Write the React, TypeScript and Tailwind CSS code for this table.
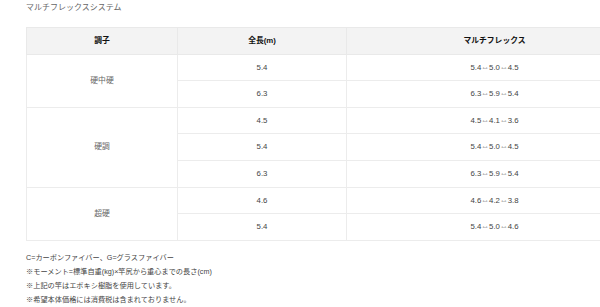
import React from "react";

const groups = [
  { name: "硬中硬", rows: [["5.4", "5.4⇔5.0⇔4.5"], ["6.3", "6.3⇔5.9⇔5.4"]] },
  { name: "硬調", rows: [["4.5", "4.5⇔4.1⇔3.6"], ["5.4", "5.4⇔5.0⇔4.5"], ["6.3", "6.3⇔5.9⇔5.4"]] },
  { name: "超硬", rows: [["4.6", "4.6⇔4.2⇔3.8"], ["5.4", "5.4⇔5.0⇔4.6"]] },
];

export default function App() {
  return (
    <div
      className="relative w-[600px] h-[307px] overflow-hidden bg-white text-[#333]"
      style={{ fontFamily: '"Liberation Sans", "Noto Sans CJK JP", sans-serif' }}
    >
      <div className="w-[700px] pl-[26px]">
        <div className="h-[27px] pt-[2px] text-[8px] leading-[12px] text-[#666]">マルチフレックスシステム</div>
        <table className="w-[616px] border-collapse table-fixed text-[7.8px]">
          <colgroup>
            <col className="w-[151px]" />
            <col className="w-[169px]" />
            <col className="w-[296px]" />
          </colgroup>
          <thead>
            <tr className="h-[26.6px] bg-[#f3f3f3]">
              <th className="border border-[#e9e9e9] font-bold text-[#111] text-center align-middle">調子</th>
              <th className="border border-[#e9e9e9] font-bold text-[#111] text-center align-middle">全長(m)</th>
              <th className="border border-[#e9e9e9] font-bold text-[#111] text-center align-middle">マルチフレックス</th>
            </tr>
          </thead>
          <tbody>
            {groups.map((g) =>
              g.rows.map((r, i) => (
                <tr key={g.name + i} className="h-[26.6px]">
                  {i === 0 && (
                    <td
                      rowSpan={g.rows.length}
                      className="border border-[#ececec] text-center align-middle text-[#666]"
                    >
                      {g.name}
                    </td>
                  )}
                  <td className="border border-[#ececec] text-center align-middle text-[#444]">{r[0]}</td>
                  <td className="border border-[#ececec] text-center align-middle text-[#444]">{r[1]}</td>
                </tr>
              ))
            )}
          </tbody>
        </table>
        <div className="pt-[10px] text-[7.2px] leading-[14.2px] text-[#444]">
          <div>C=カーボンファイバー、G=グラスファイバー</div>
          <div>※モーメント=標準自重(kg)×竿尻から重心までの長さ(cm)</div>
          <div>※上記の竿はエポキシ樹脂を使用しています。</div>
          <div>※希望本体価格には消費税は含まれておりません。</div>
        </div>
      </div>
    </div>
  );
}
